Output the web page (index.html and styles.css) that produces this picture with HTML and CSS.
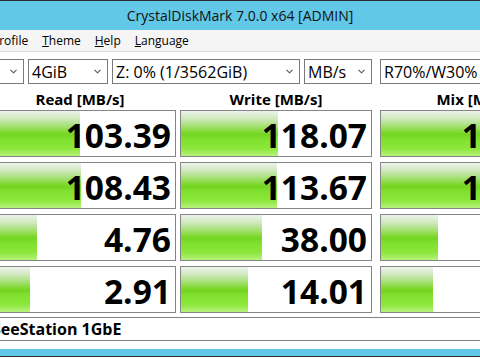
FILE: index.html
```html
<!DOCTYPE html>
<html lang="en">
<head>
    <meta charset="UTF-8">
    <meta name="viewport" content="width=device-width, initial-scale=1.0">
    <title>CrystalDiskMark 7.0.0 x64 [ADMIN]</title>
    <link rel="stylesheet" href="styles.css">
</head>
<body>
    <div class="titlebar">CrystalDiskMark 7.0.0 x64 [ADMIN]</div>

    <div class="menubar">
        <span class="menu first"><u>P</u>rofile</span>
        <span class="menu"><u>T</u>heme</span>
        <span class="menu"><u>H</u>elp</span>
        <span class="menu"><u>L</u>anguage</span>
    </div>

    <div class="main">
        <div class="controls">
            <div class="combo count"><span>5</span><svg class="chevron" viewBox="0 0 7 5"><polyline points="0.5,0.8 3.5,3.8 6.5,0.8"/></svg></div>
            <div class="combo size"><span>4GiB</span><svg class="chevron" viewBox="0 0 7 5"><polyline points="0.5,0.8 3.5,3.8 6.5,0.8"/></svg></div>
            <div class="combo drive"><span>Z: 0% (1/3562GiB)</span><svg class="chevron" viewBox="0 0 7 5"><polyline points="0.5,0.8 3.5,3.8 6.5,0.8"/></svg></div>
            <div class="combo unit"><span>MB/s</span><svg class="chevron" viewBox="0 0 7 5"><polyline points="0.5,0.8 3.5,3.8 6.5,0.8"/></svg></div>
            <div class="combo mix"><span>R70%/W30%</span><svg class="chevron" viewBox="0 0 7 5"><polyline points="0.5,0.8 3.5,3.8 6.5,0.8"/></svg></div>
        </div>

        <div class="results">
            <div class="column">
                <div class="col-head">Read [MB/s]</div>
                <div class="cell" style="--fill: 50%">103.39</div>
                <div class="cell" style="--fill: 50.5%">108.43</div>
                <div class="cell" style="--fill: 27.4%">4.76</div>
                <div class="cell" style="--fill: 23.7%">2.91</div>
            </div>
            <div class="column">
                <div class="col-head">Write [MB/s]</div>
                <div class="cell" style="--fill: 51%">118.07</div>
                <div class="cell" style="--fill: 50.5%">113.67</div>
                <div class="cell" style="--fill: 42.6%">38.00</div>
                <div class="cell" style="--fill: 35.3%">14.01</div>
            </div>
            <div class="column mix-col">
                <div class="col-head">Mix [MB/s]</div>
                <div class="cell" style="--fill: 54%">171.45</div>
                <div class="cell" style="--fill: 53.5%">163.54</div>
                <div class="cell" style="--fill: 30%">6.67</div>
                <div class="cell" style="--fill: 27.4%">4.71</div>
            </div>
        </div>

        <div class="comment">SeeStation 1GbE</div>
    </div>

    <div class="frame-bottom"></div>
</body>
</html>
```

FILE: styles.css
```css
body {
    margin: 0;
    width: 480px;
    height: 359px;
    overflow: hidden;
    background: #fff;
    color: #000;
    font-family: "Segoe UI", "Open Sans", sans-serif;
}

.titlebar {
    height: 29px;
    border-top: 1px solid #2b2b2b;
    background: #62c8e8;
    display: flex;
    justify-content: center;
    align-items: center;
    font-size: 14px;
    color: #111;
}

.menubar {
    height: 21px;
    background: #f5f5f5;
    border-bottom: 1px solid #dadada;
    display: flex;
    align-items: center;
    gap: 14px;
    font-size: 12px;
    white-space: nowrap;
}

.menu.first {
    margin-left: -8px;
}

.main {
    margin-left: -16px;
    padding-top: 7px;
    width: 600px;
}

.controls {
    display: flex;
    gap: 4px;
    height: 25px;
}

.combo {
    box-sizing: border-box;
    height: 25px;
    flex: none;
    border: 1px solid #7a7a7a;
    display: flex;
    align-items: center;
    justify-content: space-between;
    padding: 0 6px 0 3px;
    font-size: 16px;
    white-space: nowrap;
}

.combo.count { width: 40px; }
.combo.size { width: 80px; }
.combo.drive { width: 188px; }
.combo.unit { width: 68px; }
.combo.mix { width: 192px; margin-left: 4px; }

.chevron {
    width: 7px;
    height: 5px;
    fill: none;
    stroke: #555;
    stroke-width: 1.1;
}

.results {
    display: flex;
    gap: 4px;
}

.column {
    width: 192px;
    display: flex;
    flex-direction: column;
    gap: 5px;
}

.mix-col {
    margin-left: 4px;
}

.col-head {
    box-sizing: border-box;
    height: 21px;
    padding-top: 7px;
    text-align: center;
    font-size: 15px;
    font-weight: 700;
    line-height: 16px;
}

.cell {
    box-sizing: border-box;
    height: 47px;
    border: 1px solid #858585;
    display: flex;
    align-items: center;
    justify-content: flex-end;
    padding: 3px 4px 0 0;
    font-size: 33.5px;
    font-weight: 700;
    white-space: nowrap;
    background: linear-gradient(to bottom, #eef2ec 0%, #cde8ba 18%, #98de5f 38%, #7fd92f 47%, #74d421 52%, #80e02e 62%, #8ce83c 84%, #b8f27e 100%) no-repeat left top / var(--fill) 100%, #fff;
}

.comment {
    box-sizing: border-box;
    margin-top: 4px;
    height: 24px;
    border: 1px solid #828282;
    padding-left: 7px;
    font-size: 16px;
    font-weight: 700;
    line-height: 22px;
}

.frame-bottom {
    margin-top: 8px;
    height: 7px;
    background: #62c8e8;
    border-bottom: 1px solid #2b2b2b;
}
```
